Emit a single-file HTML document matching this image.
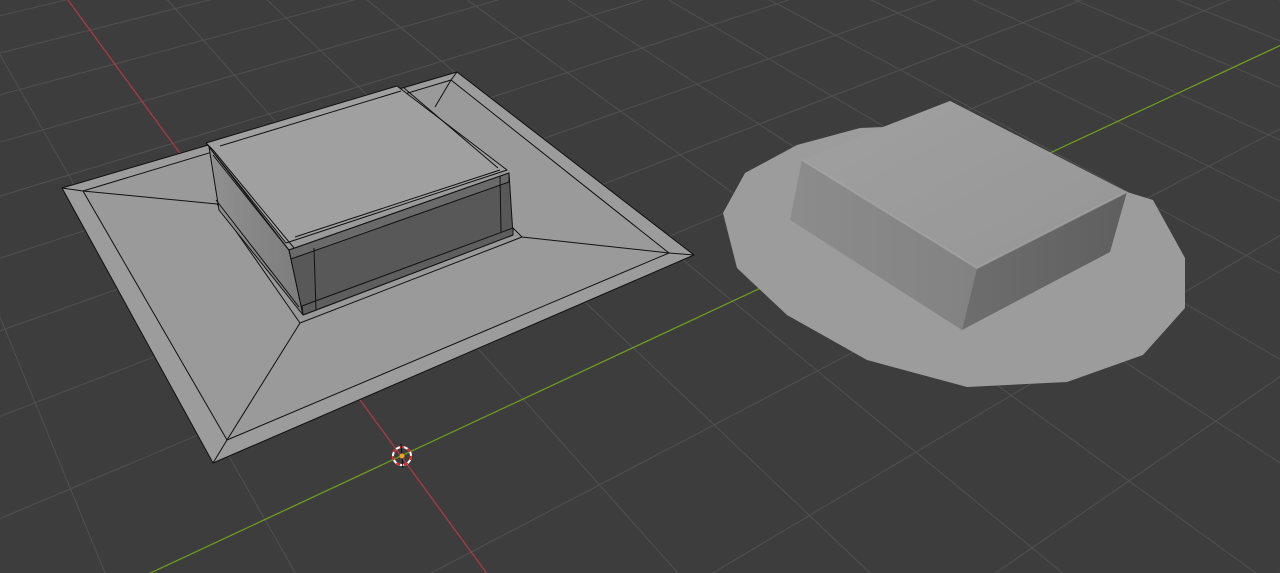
<!DOCTYPE html>
<html><head><meta charset="utf-8"><style>
html,body{margin:0;padding:0;background:#3d3d3d;overflow:hidden;width:1280px;height:573px}
svg{display:block;position:absolute;left:0;top:0}
</style></head><body>
<svg id="s" width="1280" height="573" viewBox="0 0 1280 573" xmlns="http://www.w3.org/2000/svg" overflow="hidden">
<defs>
<linearGradient id="lf" x1="0" y1="0" x2="1" y2="0"><stop offset="0" stop-color="#909090"/><stop offset="1" stop-color="#7c7c7c"/></linearGradient>
<linearGradient id="rt" x1="0" y1="0" x2="1" y2="1"><stop offset="0" stop-color="#a0a0a0"/><stop offset="1" stop-color="#969696"/></linearGradient>
<linearGradient id="rl" x1="0" y1="0" x2="1" y2="0"><stop offset="0" stop-color="#8c8c8c"/><stop offset="1" stop-color="#828282"/></linearGradient>
<linearGradient id="rr" x1="0" y1="0" x2="1" y2="0"><stop offset="0" stop-color="#6e6e6e"/><stop offset="1" stop-color="#5f5f5f"/></linearGradient>
</defs>
<rect width="1280" height="573" fill="#3d3d3d"/>
<g id="grid" stroke="#505050" stroke-width="1"></g>
<g id="axes"></g>

<g stroke="#111" stroke-width="1" stroke-linejoin="round">
<polygon points="62,188 457,72 694,255 213,463" fill="#9c9c9c"/>
<polygon points="83,191 451,80 669,253 227,440" fill="#9a9a9a"/>
<line x1="62" y1="188" x2="83" y2="191"/><line x1="457" y1="72" x2="451" y2="80"/>
<line x1="694" y1="255" x2="669" y2="253"/><line x1="213" y1="463" x2="227" y2="440"/>
<line x1="83" y1="191" x2="217" y2="204"/>
<line x1="227" y1="440" x2="300" y2="323"/>
<line x1="669" y1="253" x2="522" y2="237"/>
<line x1="451" y1="80" x2="435" y2="107"/>
<polygon points="217,204 300,323 522,237 513,228 303,312 222,200" fill="#999" />
<polygon points="209,147 289,250 303,315 219,210" fill="url(#lf)"/>
<line x1="213" y1="155" x2="296" y2="259"/>
<line x1="216" y1="200" x2="299" y2="307"/>
<polygon points="289,250 509,173 513,235 303,315" fill="#585858"/>
<polygon points="289,250 509,173 509,182 291,259" fill="#6a6a6a"/>
<polygon points="302,306 513,228 513,235 303,315" fill="#5e5e5e"/>
<line x1="314" y1="248" x2="316" y2="310"/>
<line x1="500" y1="176" x2="501" y2="232"/>
<polygon points="206,143 397,86 507,170 286,243" fill="#a0a0a0"/>
<line x1="220" y1="146" x2="401" y2="91"/>
<line x1="213" y1="150" x2="294" y2="248"/>
<line x1="295" y1="237" x2="500" y2="170"/>
<line x1="404" y1="88" x2="498" y2="168"/>
<line x1="206" y1="143" x2="213" y2="150"/>
</g>

<polygon points="723,213 745,173 797,145 860,128 883,127 950,101 1127,192 1153,200 1185,258 1185,308 1143,355 1067,382 967,387 867,360 787,315 737,268" fill="#9c9c9c"/>
<polygon points="802,160 977,268 962,330 790,220" fill="url(#rl)"/>
<polygon points="977,268 1127,192 1110,252 962,330" fill="url(#rr)"/>
<polygon points="802,160 950,101 1127,192 977,268" fill="url(#rt)"/>
<polyline points="802,160 977,268 1127,192" fill="none" stroke="#a8a8a8" stroke-width="2" opacity="0.6"/>

<g transform="translate(402,456)">
<circle r="9" fill="none" stroke="#fff" stroke-width="2"/>
<circle r="9" fill="none" stroke="#d22" stroke-width="2" stroke-dasharray="4 4"/>
<line x1="-1" y1="-12" x2="1" y2="12" stroke="#111" stroke-width="1"/>
<circle r="2.5" fill="#f0a020"/>
</g>
<script>
(function(){
var O=[401,456],VA=[-384,-619],VB=[2761,-646],sa=0.082,sb=0.0545;
function P(u,v){var w=1+u*sa+v*sb;return [(O[0]+u*sa*VA[0]+v*sb*VB[0])/w,(O[1]+u*sa*VA[1]+v*sb*VB[1])/w];}
var g=document.getElementById('grid'),ax=document.getElementById('axes'),ns='http://www.w3.org/2000/svg';
function L(p,q,c,par){var l=document.createElementNS(ns,'line');l.setAttribute('x1',p[0].toFixed(1));l.setAttribute('y1',p[1].toFixed(1));l.setAttribute('x2',q[0].toFixed(1));l.setAttribute('y2',q[1].toFixed(1));if(c){l.setAttribute('stroke',c);l.setAttribute('stroke-width','1.3');}par.appendChild(l);}
for(var k=-40;k<=80;k++){
 var vs=(0.3-(1+k*sa))/sb; var p=P(k,vs),q=P(k,3000);
 if(k===0)L(p,q,'#6f9a22',ax);else L(p,q,null,g);
 var us=(0.3-(1+k*sb))/sa; var p2=P(us,k),q2=P(3000,k);
 if(k===0)L(p2,q2,'#a8394a',ax);else L(p2,q2,null,g);
}
})();
</script>
</svg>
</body></html>
